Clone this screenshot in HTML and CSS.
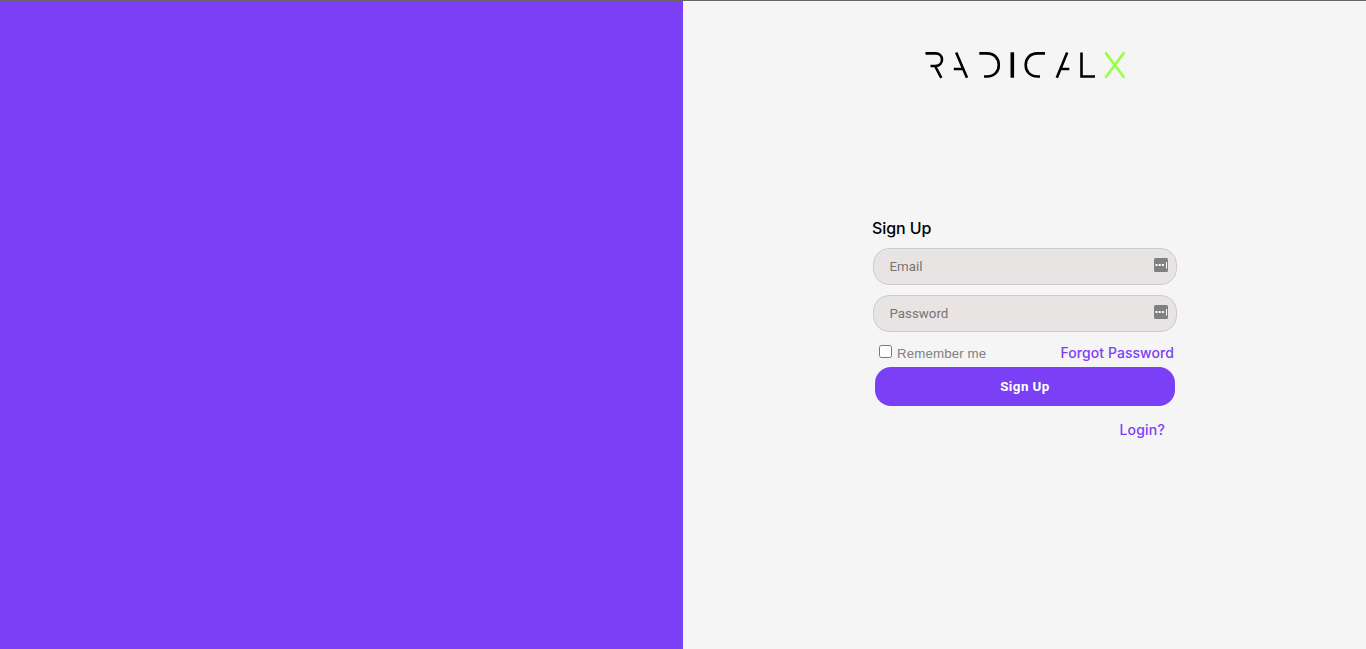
FILE: index.html
```html
<!DOCTYPE html>
<html lang="en">
<head>
<meta charset="utf-8">
<title>RadicalX - Sign Up</title>
<link rel="stylesheet" href="styles.css">
</head>
<body>
<div class="page">
  <div class="cover"></div>
  <main class="panel">
    <svg class="logo" role="img" aria-label="RadicalX" width="202" height="30" viewBox="924 50 202 30">
      <g class="logo-dark">
        <path d="M925.5 53.4H935.5C939.500 53.400 942 56 942 59.500S939.500 65.900 935.500 66H930.5M935.3 66.5L941.3 77.8"/>
        <path d="M956.2 52.4L967 77.8M953.8 69H962.5"/>
        <path d="M979.3 53.4H987C994.5 53.4 998.800 58.500 998.800 65S994.500 76.500 987 76.500H984"/>
        <path class="logo-bar" d="M1012.300 52.300V77.700"/>
        <path d="M1045 53.400H1037.500C1030 53.400 1025.700 58.500 1025.700 65S1030 76.500 1037.500 76.500H1040"/>
        <path d="M1067.200 52.400L1056.800 77.800M1061 69H1069.300"/>
        <path d="M1081.500 52.400V76.500H1095"/>
      </g>
      <path class="logo-x" d="M1105.300 52.400L1124.300 77.800M1124.300 52.400L1105.300 77.800"/>
    </svg>
    <form class="form">
      <h1 class="title">Sign Up</h1>
      <div class="field">
        <input class="input" type="email" placeholder="Email">
        <svg class="key" width="14" height="14" viewBox="0 0 14 14"><rect width="14" height="14" rx="1.500" fill="#808080"/><path d="M1.500 6h2v2h-2zM4.700 6h2v2h-2zM7.900 6h2v2h-2zM12 4h1v6.500h-1z" fill="#fff"/></svg>
      </div>
      <div class="field">
        <input class="input" type="password" placeholder="Password">
        <svg class="key" width="14" height="14" viewBox="0 0 14 14"><rect width="14" height="14" rx="1.500" fill="#808080"/><path d="M1.500 6h2v2h-2zM4.700 6h2v2h-2zM7.900 6h2v2h-2zM12 4h1v6.500h-1z" fill="#fff"/></svg>
      </div>
      <div class="options">
        <input class="check" type="checkbox" id="remember">
        <label class="remember" for="remember">Remember me</label>
        <a class="link forgot">Forgot Password</a>
      </div>
      <button class="submit" type="button">Sign Up</button>
      <a class="link login">Login?</a>
    </form>
  </main>
</div>
</body>
</html>
```
FILE: styles.css
```css
* { box-sizing: border-box; }
body { margin: 0; background: #f5f5f5; font-family: "Liberation Sans", Arial, sans-serif; }
.page { display: flex; height: 649px; border-top: 1px solid #666; overflow: hidden; }
.cover { width: 683px; background: #7b3ff6; }
.panel { width: 683px; display: flex; flex-direction: column; align-items: center; padding-top: 49px; background: #f5f5f5; }
.logo { display: block; margin-left: 1px; }
.logo path { fill: none; stroke-width: 2.6; }
.logo-dark { stroke: #000; }
.logo .logo-bar { stroke-width: 3.6; }
.logo-x { stroke: #99ff45; }
.form { width: 304px; margin: 138px 0 0 1px; display: flex; flex-direction: column; }
.title { margin: 0 0 9px -1px; height: 21px; font: 500 16px/21px Inter, sans-serif; letter-spacing: -.1px; color: #000; }
.field { position: relative; height: 37px; margin-bottom: 10px; }
.input { display: block; width: 304px; height: 37px; padding: 0 15.500px; border: 1px solid #ccc; border-radius: 16px; background: #e8e4e3; font: 13.333px Roboto, sans-serif; letter-spacing: 0; }
.input::placeholder { color: #757575; }
.key { position: absolute; right: 9px; top: 10px; }
.options { display: flex; height: 25px; padding: 3px 3px 0 6px; }
.check { width: 13px; height: 13px; margin: 0 5px 0 0; }
.remember { font-size: 13.333px; line-height: 17px; letter-spacing: .1px; color: #808080; }
.link { font: 500 14px/18px Inter, sans-serif; letter-spacing: .06px; color: #7b3ff6; }
.forgot { margin-left: auto; margin-top: -1px; }
.submit { width: 300px; height: 39px; margin: 0 2px; border: 0; border-radius: 16px; background: #7b3ff6; color: #fff; font: bold 13.333px Roboto, sans-serif; letter-spacing: .45px; }
.login { margin: 15px 12px 0 auto; letter-spacing: .2px; }
```
